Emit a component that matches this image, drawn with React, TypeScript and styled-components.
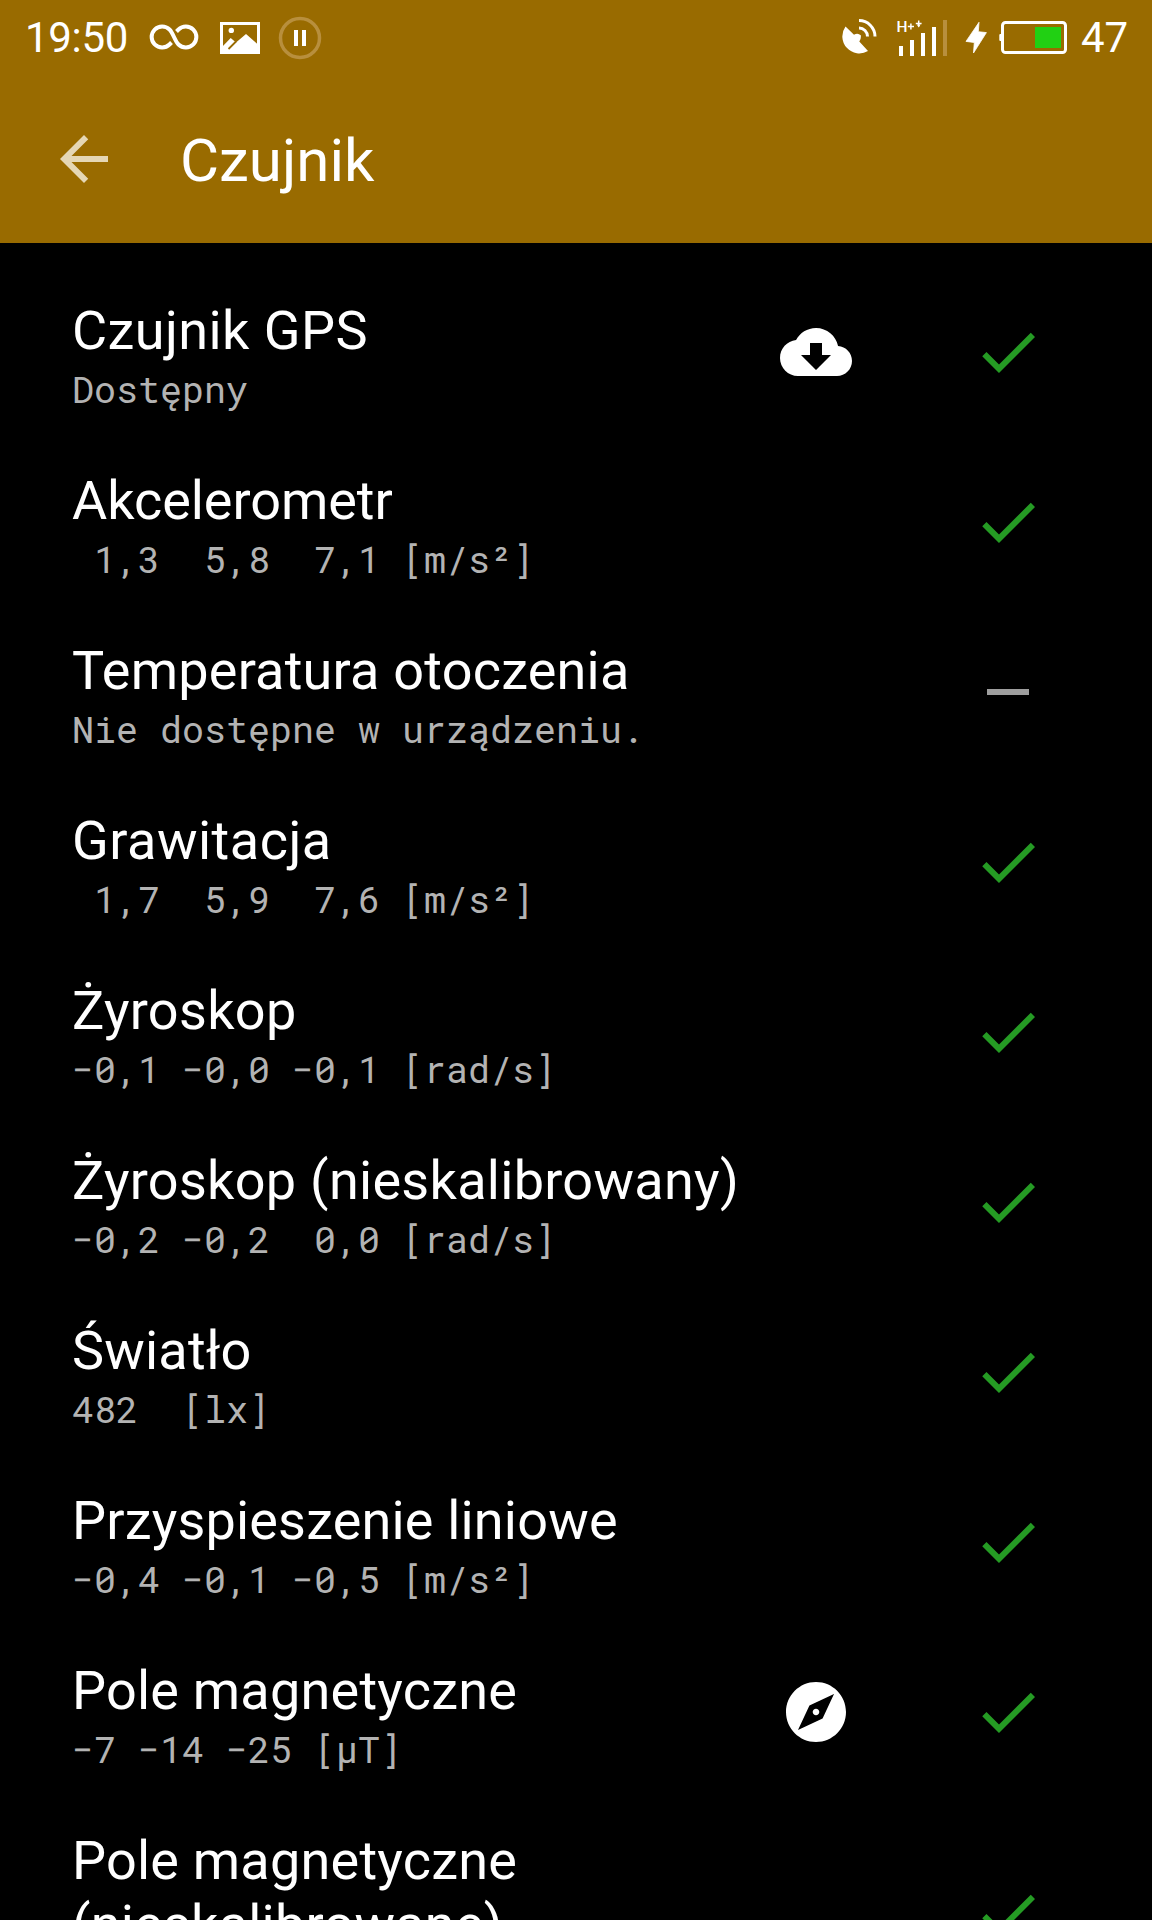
import React from "react";
import styled, { createGlobalStyle } from "styled-components";

const Global = createGlobalStyle`
  html, body { margin: 0; background: #000; }
  body { font-family: Roboto, "Liberation Sans", sans-serif; color: #fff; }
`;

const Screen = styled.main`
  width: 1152px;
  height: 1920px;
  overflow: hidden;
  background: #000;
`;

const Header = styled.header`
  height: 243px;
  background: #996b00;
  display: flex;
  flex-direction: column;
`;

const StatusBar = styled.div`
  height: 75px;
  display: flex;
  justify-content: space-between;
  align-items: center;
  padding: 0 23px 0 25px;
`;

const StatusGroup = styled.div<{ $gap: number }>`
  display: flex;
  align-items: center;
  gap: ${(p) => p.$gap}px;
`;

const StatusText = styled.span<{ $width: number; $tracking?: number }>`
  width: ${(p) => p.$width}px;
  font-size: 42px;
  line-height: 48px;
  white-space: nowrap;
  letter-spacing: ${(p) => p.$tracking ?? 0}px;
`;

const Glyph = styled.svg`
  display: block;
  flex: none;
`;

const NetworkLabel = styled.text`
  font-family: Roboto, sans-serif;
  font-size: 15.5px;
  font-weight: 500;
  fill: #fff;
`;

const Toolbar = styled.div`
  height: 168px;
  display: flex;
  align-items: center;
  padding-left: 48px;
  gap: 60px;
`;

const Title = styled.h1`
  margin: 4px 0 0;
  font-size: 60px;
  line-height: 70px;
  font-weight: 400;
`;

const List = styled.ul`
  margin: 0;
  padding: 24px 0 0;
  list-style: none;
`;

const Row = styled.li`
  display: grid;
  grid-template-columns: 708px 192px 72px;
  align-items: center;
  padding: 32px 0 23px 72px;
`;

const Label = styled.div<{ $tracking: number }>`
  font-size: 54px;
  line-height: 63.5px;
  letter-spacing: ${(p) => p.$tracking}px;
`;

const Value = styled.div`
  margin-top: 2px;
  font-family: "Roboto Mono", "DejaVu Sans Mono", monospace;
  font-size: 36.67px;
  line-height: 49.5px;
  color: #b3b3b3;
  white-space: pre;
`;

const Slot = styled.div`
  display: flex;
  margin-top: -9px;
`;

const paths = {
  back: "M20 11H7.83l5.59-5.59L12 4l-8 8 8 8 1.41-1.41L7.83 13H20v-2z",
  check: "M9 16.17L4.83 12l-1.42 1.41L9 19 21 7l-1.41-1.41z",
  dash: "M19 13H5v-2h14v2z",
  cloud:
    "M19.35 10.04C18.67 6.59 15.64 4 12 4 9.11 4 6.6 5.64 5.35 8.04 2.34 8.36 0 10.91 0 14c0 3.31 2.69 6 6 6h13c2.76 0 5-2.24 5-5 0-2.64-2.05-4.78-4.65-4.96zM17 13l-5 5-5-5h3V9h4v4h3z",
  compass:
    "M12 10.9c-.61 0-1.1.49-1.1 1.1s.49 1.1 1.1 1.1c.61 0 1.1-.49 1.1-1.1s-.49-1.1-1.1-1.1zM12 2C6.48 2 2 6.48 2 12s4.48 10 10 10 10-4.48 10-10S17.52 2 12 2zm2.19 12.19L6 18l3.81-8.19L18 6l-3.81 8.19z",
};

type IconName = keyof typeof paths;

const Icon = ({ name, color }: { name: IconName; color: string }) => (
  <Glyph width="72" height="72" viewBox="0 0 24 24" fill={color}>
    <path d={paths[name]} />
  </Glyph>
);

const NotificationIcons = () => (
  <Glyph width="175" height="45" viewBox="148 15 175 45" fill="none">
    <path
      d="M171.500 42.500L169.500 44.500A10.500 10.500 0 1 1 169.500 29.500C173.500 33.500 174.500 40.500 178.500 44.500A10.500 10.500 0 1 0 178.500 29.500L176.500 31.500"
      stroke="#fff"
      strokeWidth="4"
    />
    <rect x="221.500" y="23.500" width="37" height="29" stroke="#fff" strokeWidth="3" />
    <circle cx="231.300" cy="30.400" r="2.700" fill="#fff" />
    <path d="M222 47L230.700 38L236 42.500L246 34L258.500 45V53H222z" fill="#fff" />
    <path d="M236 41.500L228.500 49" stroke="#996b00" strokeWidth="1.800" />
    <circle cx="300" cy="38" r="19.500" stroke="#b88f3d" strokeWidth="3.500" />
    <path d="M294 30h4v16h-4zM302 30h4v16h-4z" fill="#fff" />
  </Glyph>
);

const SystemIcons = () => (
  <Glyph width="230" height="45" viewBox="840 15 230 45" fill="none">
    <path
      d="M845.500 26.500L854 34.800Q857.500 32.300 860.800 35.200Q861.300 39 859.300 41.500L868 51A17 17 0 0 1 845.500 26.500z"
      fill="#fff"
    />
    <path d="M859 28A8.500 8.500 0 0 1 867.500 36.500M859 20.600A16 16 0 0 1 875 36.500" stroke="#fff" strokeWidth="3" />
    <NetworkLabel x="896.500" y="32">H</NetworkLabel>
    <path d="M907.800 26.500h6.200M910.900 23.400v6.200M915.800 23.500h5.800M918.700 20.500v6" stroke="#fff" strokeWidth="1.500" />
    <path d="M916.800 24.500h3.800l-1.900 3z" fill="#fff" />
    <path d="M899 46h4v10h-4zM910 40h4v16h-4zM921 33h4v23h-4zM932 27h4v29h-4z" fill="#fff" />
    <path d="M943 20h4v36h-4z" fill="#b88f3d" />
    <path
      d="M979 22.300L966 41.400L974.300 42.500L973.500 53L986.400 32.600L978.300 31.700z"
      fill="#fff"
      stroke="#fff"
      strokeWidth="0.800"
      strokeLinejoin="round"
    />
    <rect x="1002.500" y="22.500" width="63" height="30" rx="3" stroke="#fff" strokeWidth="3" />
    <rect x="999.300" y="34" width="3" height="7" rx="1" fill="#fff" />
    <rect x="1035" y="27" width="26" height="21" fill="#21d013" />
  </Glyph>
);

interface Sensor {
  name: string;
  value: string;
  tracking: number;
  extra?: IconName;
  missing?: boolean;
}

const sensors: Sensor[] = [
  { name: "Czujnik GPS", value: "Dostępny", tracking: 0.42, extra: "cloud" },
  { name: "Akcelerometr", value: " 1,3  5,8  7,1 [m/s²]", tracking: -0.05 },
  { name: "Temperatura otoczenia", value: "Nie dostępne w urządzeniu.", tracking: 0.22, missing: true },
  { name: "Grawitacja", value: " 1,7  5,9  7,6 [m/s²]", tracking: 0.5 },
  { name: "Żyroskop", value: "−0,1 −0,0 −0,1 [rad/s]", tracking: 0.3 },
  { name: "Żyroskop (nieskalibrowany)", value: "−0,2 −0,2  0,0 [rad/s]", tracking: 0.29 },
  { name: "Światło", value: "482  [lx]", tracking: 0.2 },
  { name: "Przyspieszenie liniowe", value: "−0,4 −0,1 −0,5 [m/s²]", tracking: 0.18 },
  { name: "Pole magnetyczne", value: "−7 −14 −25 [µT]", tracking: 0.22, extra: "compass" },
  { name: "Pole magnetyczne (nieskalibrowane)", value: "−7 −14 −25 [µT]", tracking: 0.22 },
];

export default function App() {
  return (
    <Screen>
      <Global />
      <Header>
        <StatusBar>
          <StatusGroup $gap={20}>
            <StatusText $width={103} $tracking={-0.3}>19:50</StatusText>
            <NotificationIcons />
          </StatusGroup>
          <StatusGroup $gap={11}>
            <SystemIcons />
            <StatusText $width={48}>47</StatusText>
          </StatusGroup>
        </StatusBar>
        <Toolbar>
          <Icon name="back" color="#e5d7b5" />
          <Title>Czujnik</Title>
        </Toolbar>
      </Header>
      <List>
        {sensors.map((s) => (
          <Row key={s.name}>
            <div>
              <Label $tracking={s.tracking}>{s.name}</Label>
              <Value>{s.value}</Value>
            </div>
            <Slot>{s.extra && <Icon name={s.extra} color="#fff" />}</Slot>
            <Slot>
              <Icon name={s.missing ? "dash" : "check"} color={s.missing ? "#9e9e9e" : "#259b24"} />
            </Slot>
          </Row>
        ))}
      </List>
    </Screen>
  );
}
